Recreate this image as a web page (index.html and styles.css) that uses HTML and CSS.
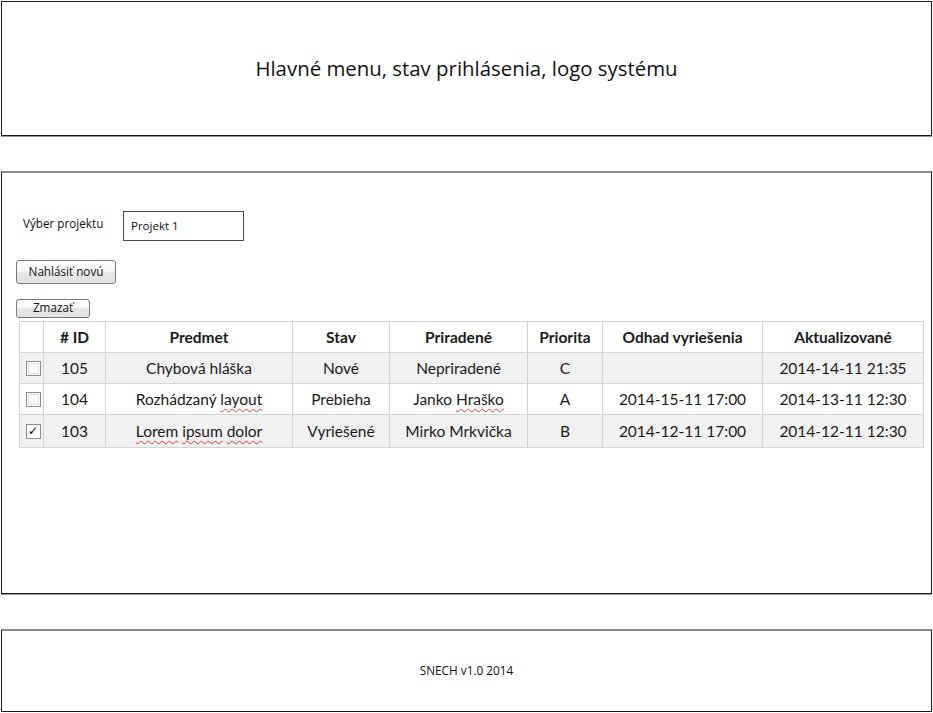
FILE: index.html
```html
<!DOCTYPE html>
<html lang="sk">
<head>
<meta charset="utf-8">
<title>SNECH</title>
<link rel="stylesheet" href="styles.css">
</head>
<body>
<div class="page">
  <header class="box top">
    <div class="top-text">Hlavné menu, stav prihlásenia, logo systému</div>
  </header>

  <main class="box main">
    <div class="project-row">
      <span class="label">Výber projektu</span>
      <div class="select">Projekt 1</div>
    </div>
    <button class="btn btn-new">Nahlásiť novú</button>
    <button class="btn btn-del">Zmazať</button>

    <table class="grid">
      <colgroup>
        <col class="c-chk"><col class="c-id"><col class="c-subj"><col class="c-state"><col class="c-asg"><col class="c-pri"><col class="c-est"><col class="c-upd">
      </colgroup>
      <thead>
        <tr>
          <th></th><th># ID</th><th>Predmet</th><th>Stav</th><th>Priradené</th><th>Priorita</th><th>Odhad vyriešenia</th><th>Aktualizované</th>
        </tr>
      </thead>
      <tbody>
        <tr class="shade">
          <td class="chk-cell"><span class="chk"></span></td>
          <td>105</td><td>Chybová hláška</td><td>Nové</td><td>Nepriradené</td><td>C</td><td></td><td>2014-14-11 21:35</td>
        </tr>
        <tr>
          <td class="chk-cell"><span class="chk"></span></td>
          <td>104</td><td>Rozhádzaný <span class="spell">layout</span></td><td>Prebieha</td><td>Janko <span class="spell">Hraško</span></td><td>A</td><td>2014-15-11 17:00</td><td>2014-13-11 12:30</td>
        </tr>
        <tr class="shade last">
          <td class="chk-cell"><span class="chk checked">✓</span></td>
          <td>103</td><td><span class="spell">Lorem</span> <span class="spell">ipsum</span> <span class="spell">dolor</span></td><td>Vyriešené</td><td>Mirko Mrkvička</td><td>B</td><td>2014-12-11 17:00</td><td>2014-12-11 12:30</td>
        </tr>
      </tbody>
    </table>
  </main>

  <footer class="box foot">
    <div class="foot-text">SNECH v1.0 2014</div>
  </footer>
</div>
</body>
</html>
```

FILE: styles.css
```css
* { box-sizing: border-box; }

html, body {
  margin: 0;
  padding: 0;
  background: #ffffff;
}

body {
  font-family: "Open Sans", "DejaVu Sans", sans-serif;
  color: #111;
}

.page {
  width: 933px;
  padding: 1px 1px 0 1px;
  display: flex;
  flex-direction: column;
  gap: 35px;
}

.box {
  width: 931px;
  border: 1px solid #1a1a1a;
  background: #fff;
  box-shadow: 0 1px 0 #9a9a9a;
}

.top {
  height: 135px;
  display: flex;
  align-items: center;
  justify-content: center;
}

.top-text {
  font-size: 20.4px;
  padding-bottom: 1px;
}

.main {
  height: 423px;
  border-top: 2px solid #8a8a8a;
  padding: 38px 9px 0 14px;
  display: flex;
  flex-direction: column;
  align-items: flex-start;
}

.project-row {
  display: flex;
  align-items: flex-start;
  margin-left: 7px;
}

.label {
  width: 100px;
  font-size: 11.7px;
  line-height: 14px;
  padding-top: 5px;
}

.select {
  width: 121px;
  height: 30px;
  border: 1px solid #4a4a4a;
  font-size: 11.5px;
  padding: 6px 0 0 7px;
}

.btn {
  font-family: "Open Sans", "DejaVu Sans", sans-serif;
  font-size: 11.7px;
  color: #111;
  border: 1px solid #7a7a7a;
  border-radius: 3px;
  background: linear-gradient(#ffffff 0%, #f6f6f6 45%, #e6e6e6 55%, #e2e2e2 100%);
  padding: 0;
  margin: 0;
}

.btn-new {
  width: 100px;
  height: 24px;
  margin-top: 19px;
  line-height: 20px;
  padding-bottom: 2px;
}

.btn-del {
  width: 74px;
  height: 19px;
  margin-top: 15px;
  line-height: 15px;
  padding-bottom: 2px;
}

.grid {
  margin-top: 3px;
  margin-left: 3px;
  width: 904px;
  border-collapse: collapse;
  table-layout: fixed;
  font-family: Lato, "Open Sans", sans-serif;
  font-size: 15.5px;
  color: #1a1a1a;
}

.c-chk { width: 24px; }
.c-id { width: 62px; }
.c-subj { width: 187px; }
.c-state { width: 97px; }
.c-asg { width: 138px; }
.c-pri { width: 75px; }
.c-est { width: 160px; }
.c-upd { width: 161px; }

.grid th,
.grid td {
  border: 1px solid #d3d3d3;
  height: 31px;
  text-align: center;
  vertical-align: middle;
  padding: 0;
  white-space: nowrap;
  overflow: hidden;
}

.grid th {
  font-weight: 700;
  background: #fff;
}

.grid tr.shade td { background: #f1f1f1; }
.grid tr.last td { height: 33px; }

.chk-cell { text-align: center; }

.chk {
  display: inline-block;
  width: 15px;
  height: 15px;
  border: 1px solid #8c8c8c;
  outline: 1px solid #e0e0e0;
  outline-offset: -3px;
  background: #fff;
  vertical-align: middle;
  margin-top: -4px;
  margin-left: 3px;
  font-family: "DejaVu Sans", sans-serif;
  font-size: 12px;
  line-height: 12px;
  font-weight: 700;
  color: #000;
  text-align: center;
}

.chk.checked { outline: none; }

.spell {
  text-decoration: underline wavy #e03030;
  text-decoration-thickness: 1px;
  text-underline-offset: 3px;
}

.foot {
  height: 83px;
  border-top: 2px solid #8a8a8a;
  display: flex;
  align-items: center;
  justify-content: center;
}

.foot-text {
  font-size: 11.8px;
  padding-bottom: 3px;
}
```
